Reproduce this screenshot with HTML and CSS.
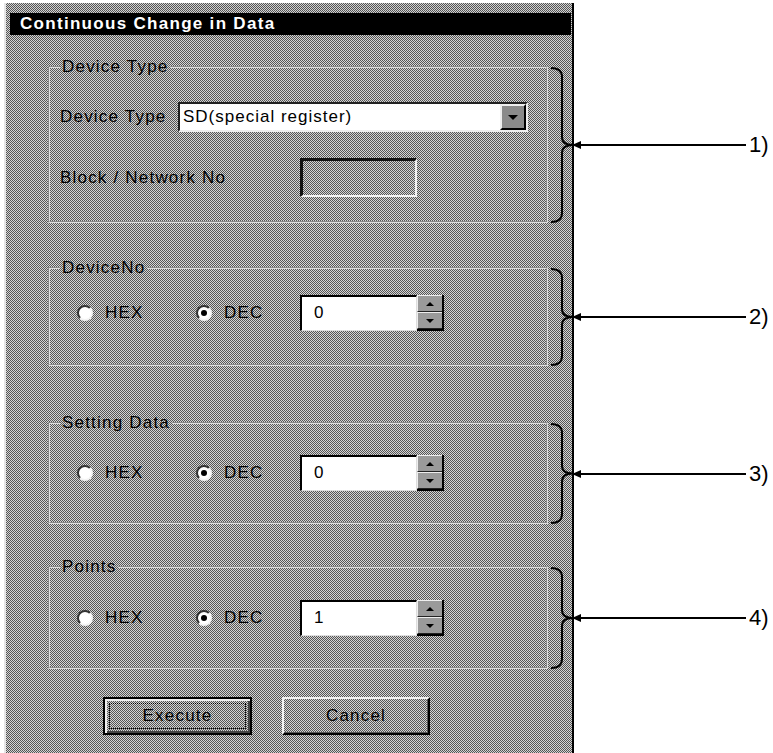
FILE: index.html
```html
<!DOCTYPE html>
<html>
<head>
<meta charset="utf-8">
<title>Continuous Change in Data</title>
<link rel="stylesheet" href="styles.css">
</head>
<body>
<div class="dialog">
  <div class="titlebar">Continuous Change in Data</div>

  <div class="section s1">
    <fieldset class="group g1">
      <legend>Device Type</legend>
      <div class="row-type">
        <span class="lbl lbl-type">Device Type</span>
        <div class="combo">
          <span class="combo-text">SD(special register)</span>
          <span class="combo-btn"><span class="tri-down"></span></span>
        </div>
      </div>
      <div class="row-block">
        <span class="lbl lbl-block">Block / Network No</span>
        <div class="disabled-box"></div>
      </div>
    </fieldset>
    <div class="callout">
      <svg class="brace" width="24" height="156" viewBox="0 0 24 156"><path d="M1,1 Q12,1 12,10 L12,70 Q12,78 23,78 Q12,78 12,86 L12,146 Q12,155 1,155" fill="none" stroke="#000" stroke-width="2"/></svg>
      <svg class="arrow" width="174" height="10" viewBox="0 0 174 10"><polygon points="0,5 9,1 9,9" fill="#000"/><line x1="8" y1="5" x2="174" y2="5" stroke="#000" stroke-width="2"/></svg>
      <span class="num">1)</span>
    </div>
  </div>

  <div class="section s2">
    <fieldset class="group g2">
      <legend>DeviceNo</legend>
      <div class="radio-row">
        <label class="opt opt-hex"><span class="radio"></span><span>HEX</span></label>
        <label class="opt opt-dec"><span class="radio on"></span><span>DEC</span></label>
        <div class="spin">
          <div class="edit">0</div>
          <div class="spin-btns"><span><i class="tri-up"></i></span><span><i class="tri-dn"></i></span></div>
        </div>
      </div>
    </fieldset>
    <div class="callout">
      <svg class="brace" width="24" height="98" viewBox="0 0 24 98"><path d="M1,1 Q12,1 12,10 L12,41 Q12,49 23,49 Q12,49 12,57 L12,88 Q12,97 1,97" fill="none" stroke="#000" stroke-width="2"/></svg>
      <svg class="arrow" width="174" height="10" viewBox="0 0 174 10"><polygon points="0,5 9,1 9,9" fill="#000"/><line x1="8" y1="5" x2="174" y2="5" stroke="#000" stroke-width="2"/></svg>
      <span class="num">2)</span>
    </div>
  </div>

  <div class="section s3">
    <fieldset class="group g3">
      <legend>Setting Data</legend>
      <div class="radio-row">
        <label class="opt opt-hex"><span class="radio"></span><span>HEX</span></label>
        <label class="opt opt-dec"><span class="radio on"></span><span>DEC</span></label>
        <div class="spin">
          <div class="edit">0</div>
          <div class="spin-btns"><span><i class="tri-up"></i></span><span><i class="tri-dn"></i></span></div>
        </div>
      </div>
    </fieldset>
    <div class="callout">
      <svg class="brace" width="24" height="101" viewBox="0 0 24 101"><path d="M1,1 Q12,1 12,10 L12,42.5 Q12,50.5 23,50.5 Q12,50.5 12,58.5 L12,91 Q12,100 1,100" fill="none" stroke="#000" stroke-width="2"/></svg>
      <svg class="arrow" width="174" height="10" viewBox="0 0 174 10"><polygon points="0,5 9,1 9,9" fill="#000"/><line x1="8" y1="5" x2="174" y2="5" stroke="#000" stroke-width="2"/></svg>
      <span class="num">3)</span>
    </div>
  </div>

  <div class="section s4">
    <fieldset class="group g4">
      <legend>Points</legend>
      <div class="radio-row">
        <label class="opt opt-hex"><span class="radio"></span><span>HEX</span></label>
        <label class="opt opt-dec"><span class="radio on"></span><span>DEC</span></label>
        <div class="spin">
          <div class="edit">1</div>
          <div class="spin-btns"><span><i class="tri-up"></i></span><span><i class="tri-dn"></i></span></div>
        </div>
      </div>
    </fieldset>
    <div class="callout">
      <svg class="brace" width="24" height="102" viewBox="0 0 24 102"><path d="M1,1 Q12,1 12,10 L12,43 Q12,51 23,51 Q12,51 12,59 L12,92 Q12,101 1,101" fill="none" stroke="#000" stroke-width="2"/></svg>
      <svg class="arrow" width="174" height="10" viewBox="0 0 174 10"><polygon points="0,5 9,1 9,9" fill="#000"/><line x1="8" y1="5" x2="174" y2="5" stroke="#000" stroke-width="2"/></svg>
      <span class="num">4)</span>
    </div>
  </div>

  <div class="buttons">
    <div class="btn btn-default">Execute</div>
    <div class="btn btn-cancel">Cancel</div>
  </div>
</div>
</body>
</html>
```

FILE: styles.css
```css
* { box-sizing: border-box; }
html, body { margin: 0; padding: 0; overflow: hidden; }
body {
  background: #fff;
  font-family: "Liberation Sans", Arial, sans-serif;
  width: 773px;
  height: 753px;
  color: #000;
}

.dialog {
  margin: 3px 0 0 4px;
  width: 570px;
  height: 750px;
  border-left: 2px solid #e6e6e6;
  border-right: 2px solid #000;
  padding-top: 10px;
  background: repeating-conic-gradient(#555 0 25%, #d4d4d4 0 50%) 0 0 / 2px 2px;
}

.titlebar {
  margin: 0 1px 0 4px;
  height: 22px;
  background: #000;
  color: #fff;
  font-weight: bold;
  font-size: 17px;
  line-height: 22px;
  letter-spacing: 1.3px;
  padding-left: 10px;
  white-space: nowrap;
}

.section { display: flex; align-items: stretch; }
.s1 { margin-top: 24px; }
.s2 { margin-top: 37px; }
.s3 { margin-top: 49px; }
.s4 { margin-top: 35px; }

.group {
  flex: none;
  width: 500px;
  min-width: 0;
  margin: 0 0 0 42px;
  border: 2px groove #dcdcdc;
  padding: 0 10px;
}
.group legend {
  font-size: 17px;
  line-height: 16px;
  letter-spacing: 1.2px;
  padding: 0 2px;
  color: #000;
}
.g1 { padding-top: 27px; padding-bottom: 24px; }
.g2 { padding-top: 19px; padding-bottom: 33px; }
.g3 { padding-top: 24px; padding-bottom: 31px; }
.g4 { padding-top: 25px; padding-bottom: 31px; }

.lbl { font-size: 17px; letter-spacing: 1.2px; white-space: nowrap; flex: none; }

.row-type { display: flex; align-items: center; height: 30px; }
.lbl-type { width: 118px; }
.combo {
  width: 350px;
  height: 30px;
  display: flex;
  background: #fff;
  border-style: solid;
  border-width: 2px;
  border-color: #222 #eee #eee #222;
}
.combo-text {
  flex: 1;
  font-size: 17px;
  letter-spacing: 1px;
  line-height: 26px;
  padding-left: 3px;
  color: #000;
  white-space: nowrap;
}
.combo-btn {
  width: 26px;
  flex: none;
  display: flex;
  align-items: center;
  justify-content: center;
  background: #8a8a8a;
  border-style: solid;
  border-width: 2px;
  border-color: #eee #000 #000 #eee;
}
.tri-down {
  width: 0; height: 0;
  border-left: 5px solid transparent;
  border-right: 5px solid transparent;
  border-top: 5px solid #000;
}

.row-block { display: flex; align-items: center; height: 39px; margin-top: 26px; }
.lbl-block { width: 240px; }
.disabled-box {
  width: 117px;
  height: 39px;
  flex: none;
  border-style: solid;
  border-width: 3px 2px 2px 3px;
  border-color: #111 #f2f2f2 #f2f2f2 #111;
}

.radio-row { display: flex; align-items: center; height: 36px; padding-left: 17px; }
.opt {
  display: flex;
  align-items: center;
  gap: 12px;
  flex: none;
  font-size: 17px;
  letter-spacing: 1.2px;
  color: #000;
}
.opt-hex { width: 119px; }
.opt-dec { width: 104px; }
.radio {
  position: relative;
  width: 16px;
  height: 16px;
  flex: none;
  border-radius: 50%;
  background: #fff;
  border: 2px solid;
  border-color: #333 #f4f4f4 #f4f4f4 #333;
}
.radio.on::after {
  content: "";
  position: absolute;
  left: 3px;
  top: 3px;
  width: 6px;
  height: 6px;
  border-radius: 50%;
  background: #000;
}

.spin { display: flex; flex: none; }
.edit {
  width: 117px;
  height: 36px;
  background: #fff;
  border-style: solid;
  border-width: 2px 1px 1px 2px;
  border-color: #000 #ddd #ddd #000;
  font-size: 17px;
  line-height: 32px;
  letter-spacing: 1px;
  padding-left: 12px;
  color: #000;
}
.spin-btns {
  width: 27px;
  height: 36px;
  display: flex;
  flex-direction: column;
  border-right: 2px solid #000;
  border-bottom: 2px solid #000;
}
.spin-btns span {
  flex: 1;
  display: flex;
  align-items: center;
  justify-content: center;
  background: #9a9a9a;
  border-top: 1px solid #eee;
  border-left: 1px solid #eee;
  border-bottom: 1px solid #222;
}
.tri-up, .tri-dn {
  display: block;
  width: 0; height: 0;
  border-left: 4px solid transparent;
  border-right: 4px solid transparent;
}
.tri-up { border-bottom: 4px solid #000; }
.tri-dn { border-top: 4px solid #000; }

.callout {
  flex: none;
  display: flex;
  align-items: center;
  margin: 8px 0 0 2px;
}
.brace { display: block; flex: none; }
.arrow { display: block; flex: none; margin-left: -2px; }
.num {
  font-size: 22px;
  line-height: 1;
  margin-left: 3px;
  color: #000;
  white-space: nowrap;
}

.buttons { display: flex; gap: 30px; margin: 28px 0 0 97px; }
.btn {
  height: 38px;
  display: flex;
  align-items: center;
  justify-content: center;
  font-size: 17px;
  letter-spacing: 1.2px;
  color: #000;
  flex: none;
}
.btn-default {
  width: 149px;
  border: 2px solid #000;
  box-shadow: inset 2px 2px 0 #eee, inset -2px -2px 0 #444;
  outline: 1px dotted #000;
  outline-offset: -7px;
}
.btn-cancel {
  width: 148px;
  border: 2px solid;
  border-color: #f2f2f2 #000 #000 #f2f2f2;
  box-shadow: inset -1px -1px 0 #555;
}
```
